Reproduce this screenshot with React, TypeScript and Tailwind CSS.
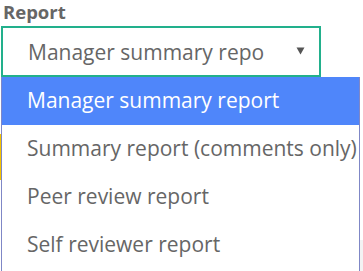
const options = [
  'Manager summary report',
  'Summary report (comments only)',
  'Peer review report',
  'Self reviewer report',
]

function App() {
  return (
    <div className="relative w-[363px] h-[271px] overflow-hidden bg-white font-['Open_Sans',sans-serif]">
      <div className="pl-[3px] h-[26px] text-[18.5px] leading-[24px] font-bold text-[#666666]">Report</div>
      <div className="ml-[1px] w-[320px] h-[51px] border-2 border-[#22b08c] flex items-center justify-between pl-[25px] pr-[14px]">
        <span className="text-[21px] leading-[28px] text-[#666666] whitespace-nowrap">Manager summary repo</span>
        <svg width="9" height="8" viewBox="0 0 9 8" className="mt-[-1px]">
          <path d="M0.5 0.5 H8.5 L4.5 7.5 Z" fill="#555555" />
        </svg>
      </div>

      {/* stuff behind the open menu */}
      <div className="absolute left-0 top-[134px] w-[2px] h-[46px] bg-[#f5c400]" />
      <div className="absolute right-0 top-[240px] w-[3px] h-[31px] bg-[#f3f3f3]" />

      <ul className="absolute left-[1px] top-[77px] w-[359px] h-[200px] bg-white border-l border-r border-[#7f87c6]">
        {options.map((o, i) => (
          <li
            key={o}
            className={`h-[48px] flex items-center pl-[25px] text-[21px] whitespace-nowrap ${
              i === 0 ? 'bg-[#4f86fa] text-white' : 'text-[#666666]'
            }`}
          >
            {o}
          </li>
        ))}
      </ul>
    </div>
  )
}

export default App
